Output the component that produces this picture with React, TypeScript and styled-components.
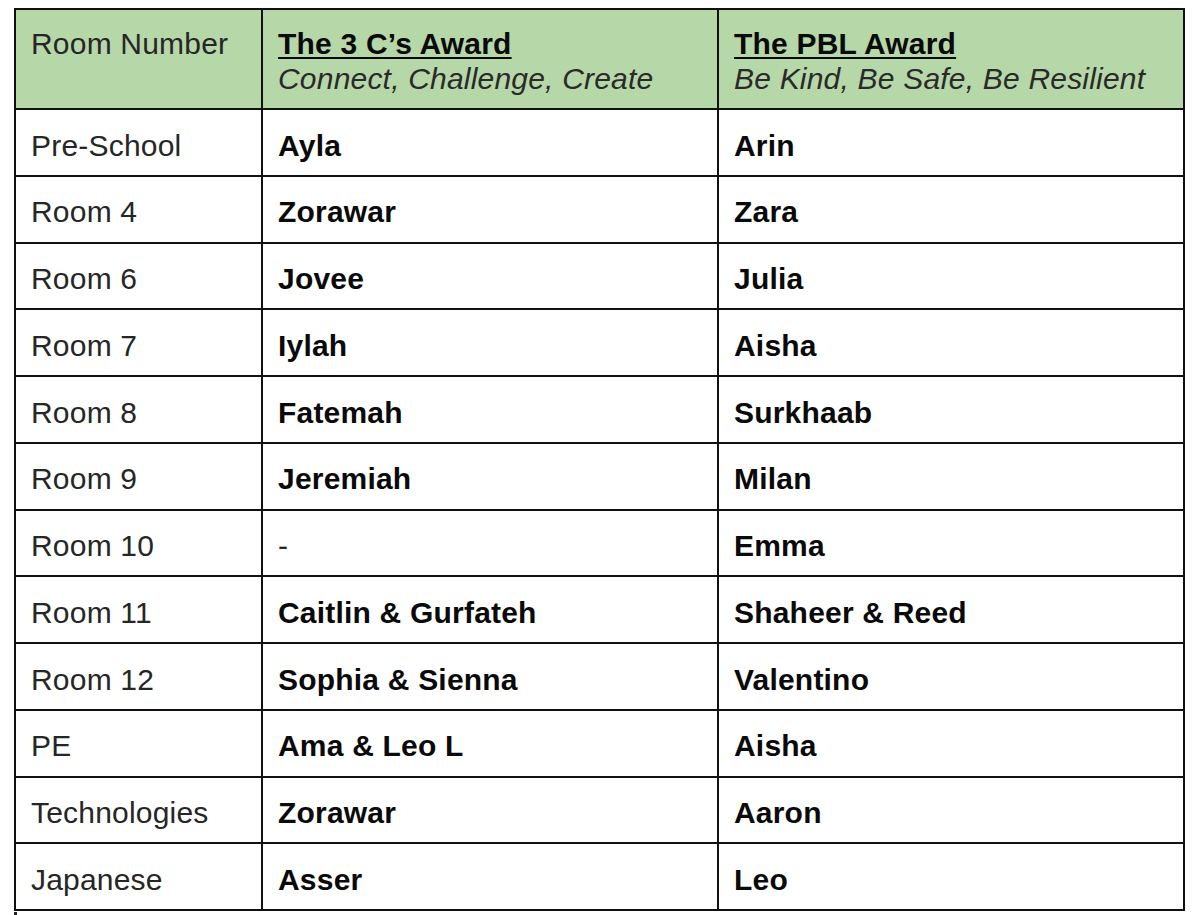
import React from "react"
import styled, {createGlobalStyle} from "styled-components"

const GlobalStyle = createGlobalStyle`
  html, body {
    margin: 0;
    padding: 0;
    background: #fff;
  }
  body {
    font-family: "Liberation Sans", Arial, sans-serif;
  }
`

const Page = styled.div`
  padding: 8px 0 0 14px;
`

const Grid = styled.div`
  display: grid;
  grid-template-columns: 247px 456px 466px;
  grid-template-rows: 100px repeat(12, 66.75px);
  width: max-content;
  border-top: 2px solid #111;
  border-left: 2px solid #111;
  font-size: 30px;
  line-height: 35px;
  letter-spacing: 0.2px;
`

const Row = styled.div`
  display: contents;
`

type CellProps = {$header?: boolean}

const Cell = styled.div<CellProps>`
  box-sizing: border-box;
  border-right: 2px solid #111;
  border-bottom: 2px solid #111;
  padding: ${(p) => (p.$header ? "16px" : "17.5px")} 15px 0 15px;
  background: ${(p) => (p.$header ? "#b6d7a8" : "#fff")};
  white-space: nowrap;
  overflow: hidden;
`

const Label = styled.div`
  color: #262626;
`

const Name = styled.div`
  color: #0a0a0a;
  font-weight: 700;
`

const Title = styled.div`
  color: #0a0a0a;
  font-weight: 700;
  text-decoration: underline;
  text-decoration-thickness: 2px;
  text-underline-offset: 3px;
`

const Motto = styled.div`
  color: #2a2a2a;
  font-style: italic;
`

const Speck = styled.div`
  width: 3px;
  height: 3px;
  margin-top: 1px;
  background: #222;
`

const rows: [string, string, string][] = [
  ["Pre-School", "Ayla", "Arin"],
  ["Room 4", "Zorawar", "Zara"],
  ["Room 6", "Jovee", "Julia"],
  ["Room 7", "Iylah", "Aisha"],
  ["Room 8", "Fatemah", "Surkhaab"],
  ["Room 9", "Jeremiah", "Milan"],
  ["Room 10", "-", "Emma"],
  ["Room 11", "Caitlin & Gurfateh", "Shaheer & Reed"],
  ["Room 12", "Sophia & Sienna", "Valentino"],
  ["PE", "Ama & Leo L", "Aisha"],
  ["Technologies", "Zorawar", "Aaron"],
  ["Japanese", "Asser", "Leo"],
]

export default function App() {
  return (
    <Page>
      <GlobalStyle />
      <Grid>
        <Row>
          <Cell $header>
            <Label>Room Number</Label>
          </Cell>
          <Cell $header>
            <Title>The 3 C’s Award</Title>
            <Motto>Connect, Challenge, Create</Motto>
          </Cell>
          <Cell $header>
            <Title>The PBL Award</Title>
            <Motto>Be Kind, Be Safe, Be Resilient</Motto>
          </Cell>
        </Row>
        {rows.map(([room, threeCs, pbl], i) => (
          <Row key={i}>
            <Cell>
              <Label>{room}</Label>
            </Cell>
            <Cell>
              {threeCs === "-" ? <Label>{threeCs}</Label> : <Name>{threeCs}</Name>}
            </Cell>
            <Cell>
              <Name>{pbl}</Name>
            </Cell>
          </Row>
        ))}
      </Grid>
      <Speck />
    </Page>
  )
}
